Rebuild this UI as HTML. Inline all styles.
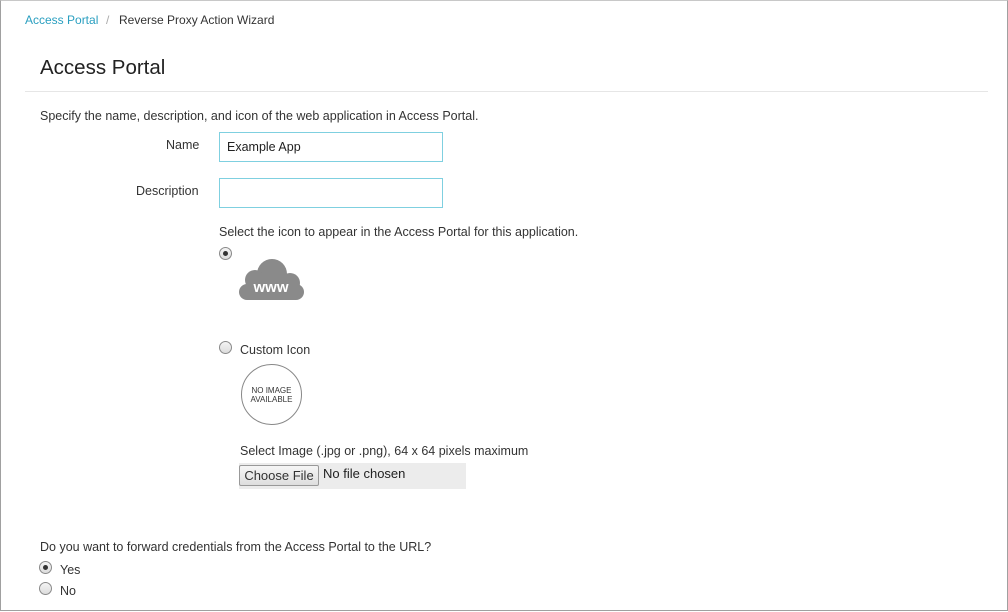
<!DOCTYPE html>
<html><head><style>
*{margin:0;padding:0;box-sizing:border-box}
body{width:1008px;height:612px;overflow:hidden;background:#fff;font-family:"Liberation Sans",sans-serif;color:#333;font-size:12.5px;position:relative}
.frame{position:absolute;left:0;top:0;width:1008px;height:611px;border:1px solid #a0a0a0;border-top:1px solid #c8c8c8}
.a{position:absolute;white-space:nowrap}
.inp{position:absolute;border:1px solid #7fd0e0;background:#fff;height:30px;width:224px;left:219px}
.radio{position:absolute;width:13px;height:13px;border-radius:50%;border:1px solid #8a8a8a;background:linear-gradient(#f4f4f4,#dcdcdc)}
.radio.on::after{content:"";position:absolute;left:3px;top:3px;width:5px;height:5px;border-radius:50%;background:#333}
</style></head><body>
<div class="frame"></div>
<div class="a" style="left:25px;top:13px;color:#2a9fc0;font-size:12px">Access Portal</div>
<div class="a" style="left:106px;top:13px;color:#aaa;font-size:12px">/</div>
<div class="a" style="left:119px;top:13px;color:#333;font-size:12px">Reverse Proxy Action Wizard</div>
<div class="a" style="left:40px;top:56px;font-size:20.5px;color:#222">Access Portal</div>
<div class="a" style="left:25px;top:91px;width:963px;height:1px;background:#e6e6e6"></div>
<div class="a" style="left:40px;top:109px">Specify the name, description, and icon of the web application in Access Portal.</div>
<div class="a" style="left:166px;top:138px">Name</div>
<div class="inp" style="top:132px"><span class="a" style="left:7px;top:7px;color:#222">Example App</span></div>
<div class="a" style="left:136px;top:184px">Description</div>
<div class="inp" style="top:178px"></div>
<div class="a" style="left:219px;top:225px">Select the icon to appear in the Access Portal for this application.</div>
<div class="radio on" style="left:219px;top:247px"></div>
<svg class="a" style="left:238px;top:258px" width="67" height="43" viewBox="0 0 67 43">
<g fill="#8a8a8a">
<circle cx="34" cy="16" r="15"/>
<circle cx="17" cy="22" r="10"/>
<circle cx="52" cy="25" r="10"/>
<circle cx="9" cy="34" r="8"/>
<circle cx="58" cy="34" r="8"/>
<rect x="9" y="24" width="49" height="18"/>
</g>
<text x="33" y="34" text-anchor="middle" font-family="Liberation Sans" font-weight="bold" font-size="15" fill="#fff">www</text>
</svg>
<div class="radio" style="left:219px;top:341px"></div>
<div class="a" style="left:240px;top:343px">Custom Icon</div>
<div class="a" style="left:241px;top:364px;width:61px;height:61px;border:1px solid #888;border-radius:50%"></div>
<div class="a" style="left:241px;top:386px;width:61px;text-align:center;font-size:8px;line-height:9px;color:#333">NO IMAGE<br>AVAILABLE</div>
<div class="a" style="left:240px;top:444px">Select Image (.jpg or .png), 64 x 64 pixels maximum</div>
<div class="a" style="left:239px;top:463px;width:227px;height:26px;background:#ececec"></div>
<div class="a" style="left:239px;top:465px;width:80px;height:21px;border:1px solid #999;border-radius:2px;background:linear-gradient(#f6f6f6,#dedede);font-size:13px;text-align:center;line-height:19px;color:#333">Choose File</div>
<div class="a" style="left:323px;top:466px;color:#222;font-size:13px">No file chosen</div>
<div class="a" style="left:40px;top:540px">Do you want to forward credentials from the Access Portal to the URL?</div>
<div class="radio on" style="left:39px;top:561px"></div>
<div class="a" style="left:60px;top:563px">Yes</div>
<div class="radio" style="left:39px;top:582px"></div>
<div class="a" style="left:60px;top:584px">No</div>
</body></html>
